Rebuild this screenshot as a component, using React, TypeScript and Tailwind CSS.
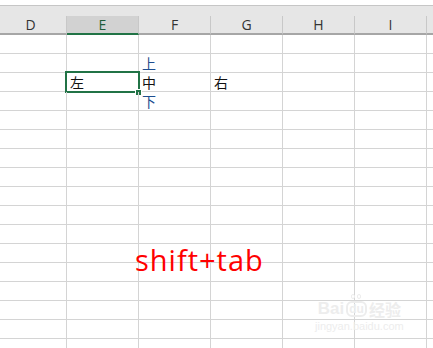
const cols = ["D", "E", "F", "G", "H", "I", ""];
const rowCount = 17;

const cellText: Record<string, { text: string; color: string }> = {
  "1-F": { text: "上", color: "#1f4e8f" },
  "2-E": { text: "左", color: "#111111" },
  "2-F": { text: "中", color: "#111111" },
  "2-G": { text: "右", color: "#111111" },
  "3-F": { text: "下", color: "#1f4e8f" },
};

function colWidth(i: number) {
  return i === 0 ? "w-[72px] ml-[-5px]" : "w-[72px]";
}

export default function App() {
  return (
    <div className="relative w-[433px] h-[348px] overflow-hidden bg-white font-['Open_Sans',sans-serif]">
      {/* top strip */}
      <div className="h-[6px] bg-white border-b border-[#c6c6c6]" />

      {/* column headers */}
      <div className="h-[29px] bg-[#e6e6e6] flex items-end">
        {cols.map((c, i) => (
          <div
            key={i}
            className={`${colWidth(i)} shrink-0 h-[19px] border-r border-r-[#c8c8c8] border-b-2 flex items-center justify-center text-[14px] leading-[17px] ${
              c === "E"
                ? "bg-[#d2d2d2] border-b-[#217346] text-[#1f5c3a]"
                : "border-b-[#a6a6a6] text-[#333333]"
            }`}
          >
            {c}
          </div>
        ))}
      </div>

      {/* grid */}
      <div className="flex flex-col">
        {Array.from({ length: rowCount }).map((_, r) => (
          <div key={r} className="flex h-[19px] border-b border-[#d4d4d4] shrink-0">
            {cols.map((c, i) => {
              const v = cellText[`${r}-${c}`];
              const selected = r === 2 && c === "E";
              return (
                <div
                  key={i}
                  className={`${colWidth(i)} shrink-0 relative border-r border-[#d4d4d4] flex items-end pl-[3px]`}
                >
                  {v && (
                    <span
                      className="text-[14px] leading-[18px] font-['Noto_Sans_CJK_SC',sans-serif]"
                      style={{ color: v.color }}
                    >
                      {v.text}
                    </span>
                  )}
                  {selected && (
                    <>
                      <div className="absolute left-[-2px] top-[-2px] w-[75px] h-[22px] border-2 border-[#217346]" />
                      <div className="absolute left-[68px] top-[16px] w-[7px] h-[7px] bg-[#217346] border border-white" />
                    </>
                  )}
                </div>
              );
            })}
          </div>
        ))}
      </div>

      {/* annotation */}
      <div className="absolute left-[135px] top-[241px] text-[29px] leading-[38px] tracking-[1px] text-[#ff0000]">
        shift+tab
      </div>

      {/* watermark */}
      <div className="absolute left-[315px] top-[300px] flex flex-col items-center text-[#ededed] select-none">
        <div className="flex items-end gap-[2px] leading-none">
          <span className="text-[17px] font-bold font-['Liberation_Sans',sans-serif]">Bai</span>
          <span className="relative text-[12px] font-bold font-['Liberation_Sans',sans-serif] border-2 border-[#ededed] rounded-[6px] px-[1px]">
            du
            <span className="absolute left-[3px] top-[-9px] flex gap-[2px]">
              <span className="w-[4px] h-[5px] rounded-full border border-[#ededed]" />
              <span className="w-[4px] h-[5px] rounded-full border border-[#ededed]" />
            </span>
          </span>
          <span className="text-[16px] font-bold font-['Noto_Sans_CJK_SC',sans-serif]">经验</span>
        </div>
        <div className="text-[11px] leading-[14px] font-['Liberation_Sans',sans-serif] mt-[2px]">
          jingyan.baidu.com
        </div>
      </div>
    </div>
  );
}
